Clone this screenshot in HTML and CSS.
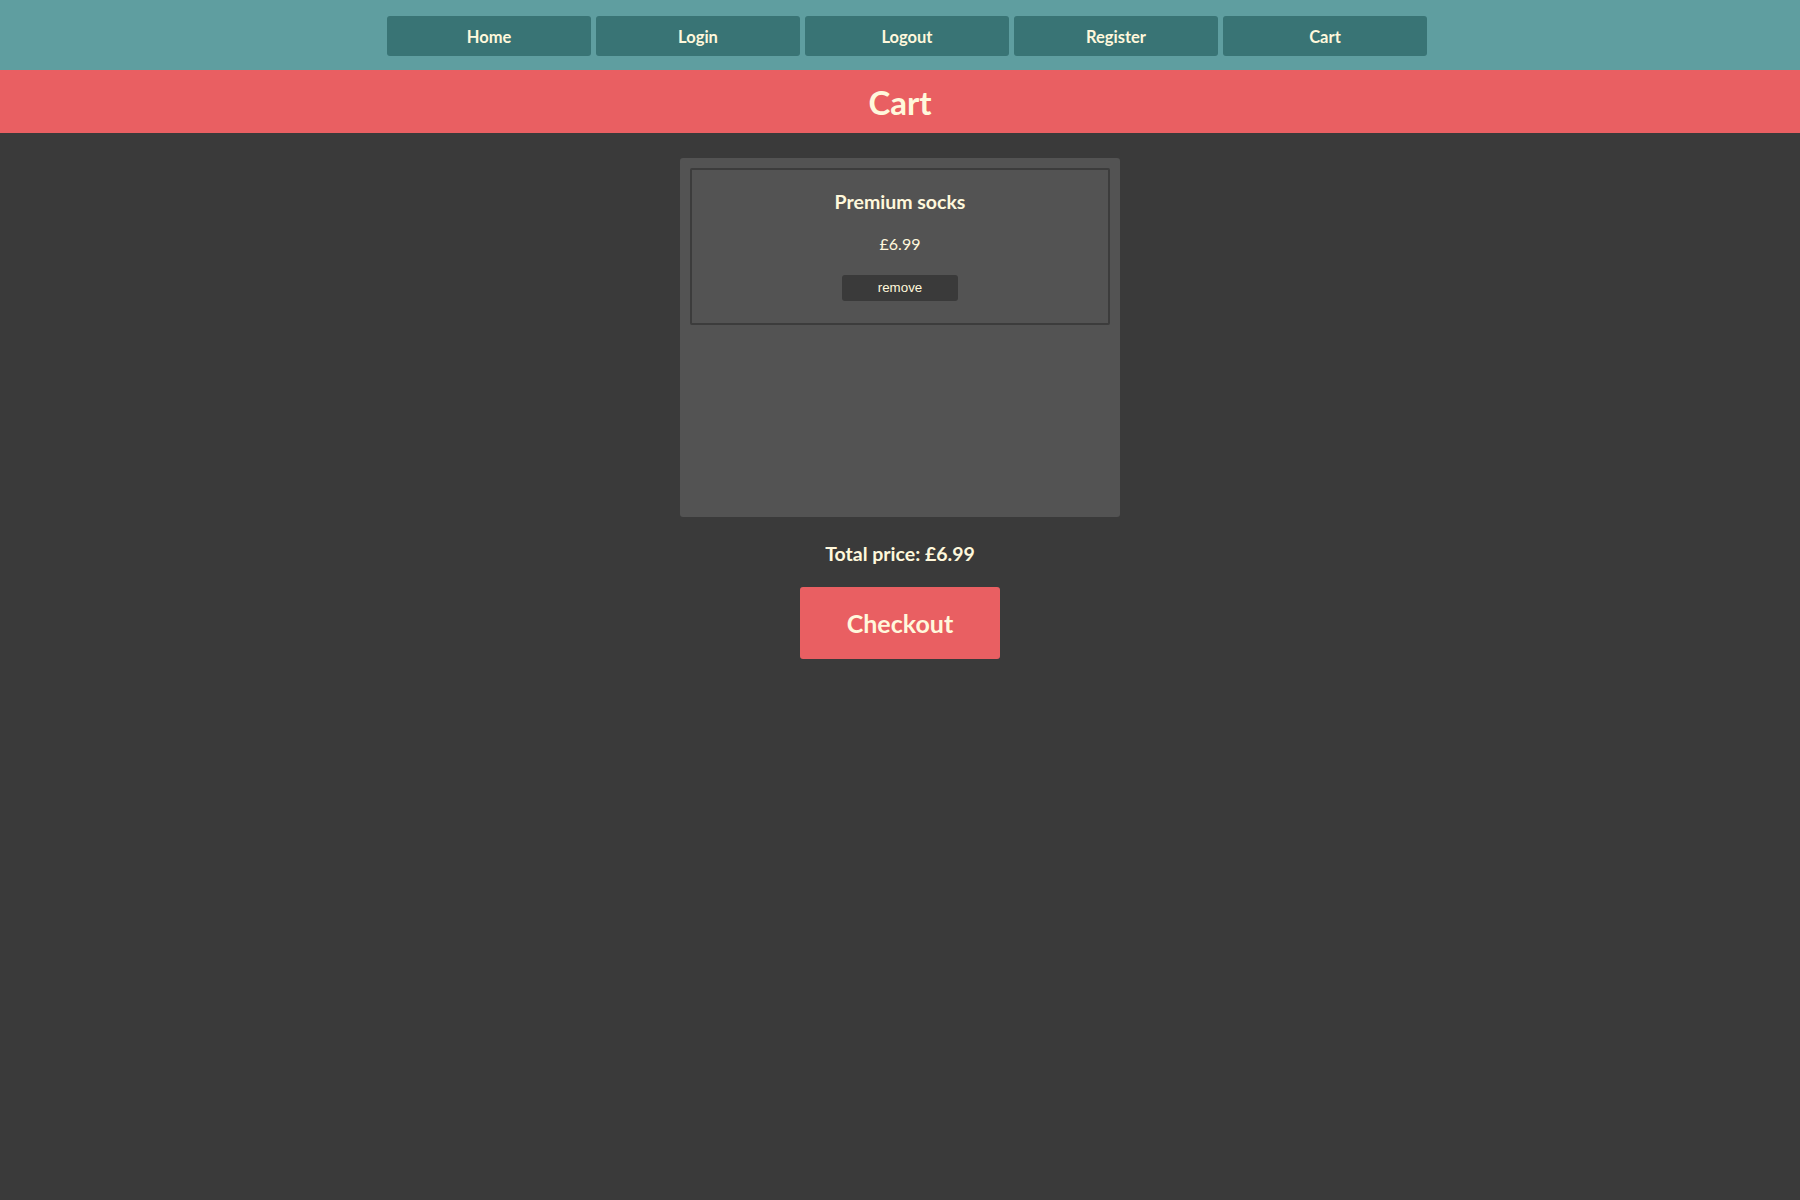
FILE: index.html
```html
<!DOCTYPE html>
<html lang="en">
<head>
<meta charset="utf-8">
<title>Cart</title>
<link rel="stylesheet" href="styles.css">
</head>
<body>
<nav class="nav">
  <a class="nav-btn" href="#">Home</a>
  <a class="nav-btn" href="#">Login</a>
  <a class="nav-btn" href="#">Logout</a>
  <a class="nav-btn" href="#">Register</a>
  <a class="nav-btn" href="#">Cart</a>
</nav>
<header class="banner">
  <h1 class="banner-title">Cart</h1>
</header>
<main class="main">
  <section class="cart">
    <div class="item">
      <h3 class="item-title">Premium socks</h3>
      <p class="item-price">£6.99</p>
      <button class="remove-btn">remove</button>
    </div>
  </section>
  <p class="total">Total price: £6.99</p>
  <button class="checkout-btn">Checkout</button>
</main>
</body>
</html>
```

FILE: styles.css
```css
html, body {
  margin: 0;
  padding: 0;
}
body {
  background: #3a3a3a;
  font-family: Lato, "Open Sans", sans-serif;
  color: #fff8dc;
}
.nav {
  background: #5f9ea0;
  height: 70px;
  box-sizing: border-box;
  padding: 16px 0 0 14px;
  display: flex;
  justify-content: center;
  align-items: flex-start;
  gap: 5px;
}
.nav-btn {
  width: 204px;
  height: 40px;
  background: #397475;
  border-radius: 3px;
  color: #fff8dc;
  text-decoration: none;
  font-weight: 700;
  font-size: 16.5px;
  display: flex;
  align-items: center;
  justify-content: center;
  padding-top: 1px;
  box-sizing: border-box;
}
.banner {
  background: #e95f62;
  height: 63px;
}
.banner-title {
  margin: 0;
  font-size: 33px;
  font-weight: 700;
  line-height: 64px;
  text-align: center;
}
.main {
  display: flex;
  flex-direction: column;
  align-items: center;
  padding-top: 25px;
}
.cart {
  width: 440px;
  height: 359px;
  box-sizing: border-box;
  background: #535353;
  border-radius: 3px;
  padding: 10px;
}
.item {
  border: 2px solid #3c3c3c;
  border-radius: 2px;
  display: flex;
  flex-direction: column;
  align-items: center;
  padding-bottom: 22px;
}
.item-title {
  margin: 20px 0 0;
  font-size: 19.5px;
  line-height: 24px;
  font-weight: 700;
}
.item-price {
  margin: 20px 0 0;
  font-size: 16px;
  line-height: 20px;
}
.remove-btn {
  margin-top: 21px;
  width: 116px;
  height: 26px;
  background: #3a3a3a;
  color: #fff8dc;
  border: none;
  border-radius: 3px;
  font-family: "Liberation Sans", Arial, sans-serif;
  font-size: 13.33px;
  padding: 0 0 2px;
}
.total {
  margin: 26px 0 0;
  font-size: 19.5px;
  line-height: 22px;
  font-weight: 700;
}
.checkout-btn {
  margin-top: 22px;
  width: 200px;
  height: 72px;
  background: #e95f62;
  color: #fff8dc;
  border: none;
  border-radius: 3px;
  font-family: Lato, "Open Sans", sans-serif;
  font-size: 25px;
  font-weight: 700;
  padding: 0;
}
```
